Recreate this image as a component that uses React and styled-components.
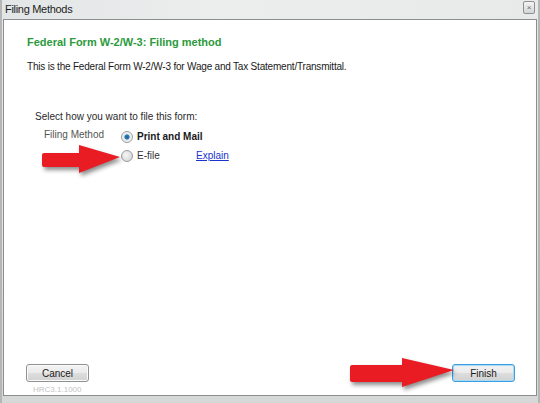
import styled, { createGlobalStyle } from "styled-components";

const GlobalStyle = createGlobalStyle`
  html, body {
    margin: 0;
    padding: 0;
    background: #d9dadb;
  }
  body {
    font-family: "Liberation Sans", Arial, sans-serif;
  }
`;

const Window = styled.div`
  position: relative;
  width: 540px;
  height: 403px;
  display: flex;
  flex-direction: column;
  box-sizing: border-box;
  background: linear-gradient(180deg, #e7e9e9 0%, #e2e4e4 60%, #d6d8d8 100%);
  border-left: 2px solid #b4b6b7;
  border-right: 2px solid #b4b6b7;
  overflow: hidden;
`;

const TitleBar = styled.div`
  height: 19px;
  flex: none;
  display: flex;
  align-items: center;
  justify-content: space-between;
  padding: 0 3px 0 3px;
  background: linear-gradient(90deg, #e3e6e6 0%, #eceeee 40%, #e8eaea 100%);
`;

const Title = styled.span`
  font-size: 11px;
  letter-spacing: -0.3px;
  color: #1c1c1c;
  margin-top: -1px;
`;

const CloseBox = styled.span`
  width: 10px;
  height: 11px;
  margin-top: -4px;
  border: 1px solid #8e9091;
  border-radius: 2px;
  background: linear-gradient(180deg, #f4f4f4, #d4d5d6);
  display: flex;
  align-items: center;
  justify-content: center;
  font-size: 8px;
  line-height: 1;
  color: #6a6a6a;
`;

const Panel = styled.div`
  flex: 1;
  margin: 0 1px 7px 1px;
  border: 1px solid #8b8d8e;
  background: #ffffff;
  display: flex;
  flex-direction: column;
  padding: 14px 21px 0 23px;
  overflow: hidden;
`;

const Heading = styled.h1`
  margin: 0;
  font-size: 11px;
  font-weight: bold;
  color: #2c9a3c;
  line-height: 16px;
`;

const Description = styled.p`
  margin: 10px 0 0 0;
  font-size: 10px;
  letter-spacing: -0.2px;
  color: #1a1a1a;
  line-height: 14px;
`;

const Prompt = styled.p`
  margin: 36px 0 0 8px;
  font-size: 10px;
  color: #2a2a2a;
  line-height: 14px;
`;

const MethodRow = styled.div`
  display: flex;
  align-items: center;
  height: 19px;
  margin-left: 17px;
  margin-top: ${(p) => (p.$first ? "3px" : "0")};
`;

const FieldLabel = styled.span`
  width: 77px;
  flex: none;
  font-size: 10px;
  color: #555;
  margin-top: -4px;
`;

const Option = styled.label`
  display: flex;
  align-items: center;
  gap: 4px;
  width: ${(p) => (p.$bold ? "auto" : "75px")};
  font-size: 10px;
  font-weight: ${(p) => (p.$bold ? "bold" : "normal")};
  color: ${(p) => (p.$bold ? "#1a1a1a" : "#333")};
  margin-left: ${(p) => (p.$indent ? "77px" : "0")};
`;

const Radio = styled.span`
  width: 10px;
  height: 10px;
  border-radius: 50%;
  border: 1px solid #9a9c9e;
  background: ${(p) =>
    p.$checked
      ? "radial-gradient(circle, #1f5f8f 0, #2f7fb5 2.2px, #e6e8ea 3px, #f7f7f7 6px)"
      : "radial-gradient(circle at 40% 40%, #f6f6f6 0, #d9dbdd 70%, #c9cbcd 100%)"};
  flex: none;
`;

const Link = styled.a`
  font-size: 10px;
  color: #1a33cc;
  text-decoration: underline;
`;

const Spacer = styled.div`
  flex: 1;
`;

const ButtonRow = styled.div`
  display: flex;
  justify-content: space-between;
  margin-left: -1px;
`;

const Button = styled.button`
  width: 63px;
  height: 18px;
  padding: 0;
  font-family: "Liberation Sans", Arial, sans-serif;
  font-size: 10px;
  color: #1a1a1a;
  border-radius: 3px;
  border: 1px solid ${(p) => (p.$focused ? "#3d9de0" : "#8f9193")};
  box-shadow: ${(p) => (p.$focused ? "inset 0 0 0 1px #a6dbf6" : "inset 0 0 0 1px #fbfbfb")};
  background: linear-gradient(180deg, #f3f3f3 0%, #ebebeb 48%, #dddddd 52%, #d2d2d2 100%);
`;

const Version = styled.span`
  font-size: 8px;
  color: #c4c4c4;
  margin: 3px 0 0 6px;
  line-height: 10px;
  height: 10px;
  flex: none;
`;

const ArrowMark = styled.svg`
  position: absolute;
  overflow: visible;
  filter: drop-shadow(2px 3px 2px rgba(0, 0, 0, 0.45));
`;

const RED = "#e91c24";

const App = () => (
  <>
    <GlobalStyle />
    <Window>
      <TitleBar>
        <Title>Filing Methods</Title>
        <CloseBox>×</CloseBox>
      </TitleBar>
      <Panel>
        <Heading>Federal Form W-2/W-3: Filing method</Heading>
        <Description>
          This is the Federal Form W-2/W-3 for Wage and Tax Statement/Transmittal.
        </Description>
        <Prompt>Select how you want to file this form:</Prompt>
        <MethodRow $first>
          <FieldLabel>Filing Method</FieldLabel>
          <Option $bold>
            <Radio $checked />
            Print and Mail
          </Option>
        </MethodRow>
        <MethodRow>
          <Option $indent>
            <Radio />
            E-file
          </Option>
          <Link href="#">Explain</Link>
        </MethodRow>
        <Spacer />
        <ButtonRow>
          <Button>Cancel</Button>
          <Button $focused>Finish</Button>
        </ButtonRow>
        <Version>HRC3.1.1000</Version>
      </Panel>

      <ArrowMark
        style={{ left: 38, top: 143 }}
        width="80"
        height="32"
        viewBox="0 0 80 32"
      >
        <path
          d="M4 10 L39 10 L39 2 L80 14 L39 30 L39 24 L4 24 Q2 24 2 22 L2 12 Q2 10 4 10 Z"
          fill={RED}
        />
      </ArrowMark>
      <ArrowMark
        style={{ left: 346, top: 356 }}
        width="106"
        height="32"
        viewBox="0 0 106 32"
      >
        <path
          d="M4 9 L54 9 L54 2 L106 14 L54 31 L54 26 L4 26 Q2 26 2 24 L2 11 Q2 9 4 9 Z"
          fill={RED}
        />
      </ArrowMark>
    </Window>
  </>
);

export default App;
